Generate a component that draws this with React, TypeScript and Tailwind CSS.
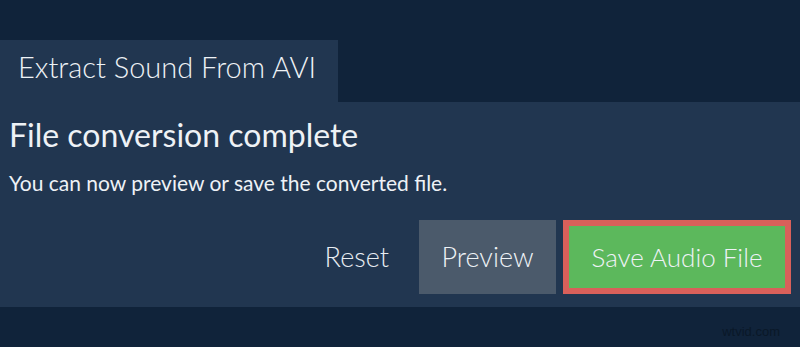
export default function App() {
  return (
    <div className="w-[800px] h-[347px] bg-[#10233a] font-['Lato','Noto_Sans',sans-serif] text-[#eef2f6] flex flex-col">
      <div className="h-[40px]" />
      {/* tab */}
      <div className="w-[338px] h-[62px] bg-[#213650] pl-[18px] pt-[12px]">
        <span className="block text-[29px] font-light leading-none">Extract Sound From AVI</span>
      </div>
      {/* panel */}
      <div className="h-[205px] bg-[#213650] px-[9px] pt-[13px] flex flex-col">
        <h1 className="text-[32px] leading-[40px] font-normal">File conversion complete</h1>
        <p className="text-[21px] leading-[26px] mt-[15px]">You can now preview or save the converted file.</p>
        <div className="flex items-center justify-end mt-[24px]">
          <button className="text-[27px] font-light text-[#e8edf2] mr-[30px]">Reset</button>
          <button className="w-[137px] h-[74px] bg-[#4b5a6b] text-[27px] font-light">Preview</button>
          <button className="w-[228px] h-[74px] ml-[7px] border-[6px] border-[#d9605a] bg-[#5cb85c] text-[26px] font-light">
            Save Audio File
          </button>
        </div>
      </div>
      <div className="flex-1 relative">
        <span className="absolute right-[20px] bottom-[6px] text-[13px] text-[#0a1828] font-['Liberation_Sans',sans-serif]">
          wtvid.com
        </span>
      </div>
    </div>
  );
}
